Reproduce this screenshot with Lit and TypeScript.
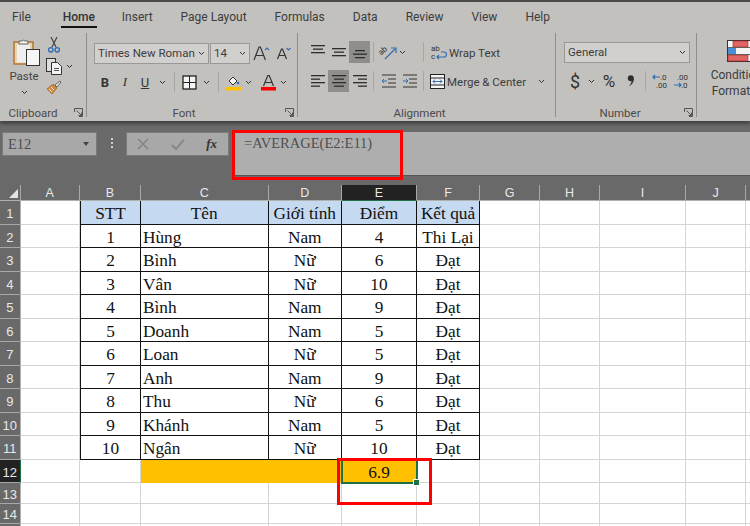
import { LitElement, html, css, svg } from "lit";
import { customElement } from "lit/decorators.js";

const COLS = [
  ["A", 59.5],
  ["B", 61],
  ["C", 127.5],
  ["D", 73.5],
  ["E", 75],
  ["F", 63],
  ["G", 60],
  ["H", 60],
  ["I", 86],
  ["J", 60],
  ["", 10],
] as [string, number][];

const ROWS: [string, string, string, string, string][] = [
  ["STT", "Tên", "Giới tính", "Điểm", "Kết quả"],
  ["1", "Hùng", "Nam", "4", "Thi Lại"],
  ["2", "Bình", "Nữ", "6", "Đạt"],
  ["3", "Vân", "Nữ", "10", "Đạt"],
  ["4", "Bình", "Nam", "9", "Đạt"],
  ["5", "Doanh", "Nam", "5", "Đạt"],
  ["6", "Loan", "Nữ", "5", "Đạt"],
  ["7", "Anh", "Nam", "9", "Đạt"],
  ["8", "Thu", "Nữ", "6", "Đạt"],
  ["9", "Khánh", "Nam", "5", "Đạt"],
  ["10", "Ngân", "Nữ", "10", "Đạt"],
];

const chev = html`<svg class="chev" width="7" height="5" viewBox="0 0 7 5"><path d="M1 1l2.500 2.500L6 1" fill="none" stroke="#333" stroke-width="1"/></svg>`;

const launcher = html`<svg class="launcher" width="9" height="9" viewBox="0 0 9 9"><path d="M.5 4V.5H8.500V8.500H5M2.500 2.500l5 5M4.500 7.500h3v-3" fill="none" stroke="#555" stroke-width="1"/></svg>`;

// horizontal text lines used by the alignment buttons
const lines = (rows: [number, number][], top = 3) => html`<svg width="16" height="16" viewBox="0 0 16 16">
  ${rows.map(
    ([x, w], i) => svg`<rect x=${x} y=${top + i * 3.5} width=${w} height="1.300" fill="#2e2e2e"/>`
  )}
</svg>`;

@customElement("app-root")
export class AppRoot extends LitElement {
  static styles = css`
    :host {
      display: block;
      width: 750px;
      height: 526px;
      overflow: hidden;
      position: relative;
      background: #6a6a6a;
      font-family: Roboto, "Open Sans", sans-serif;
    }
    .tabs {
      background: #c3c1be;
      display: flex;
      font-size: 12px;
      color: #3c3c3c;
      box-sizing: border-box;
      padding-left: 12px;
      border-top: 2px solid #4a4a4a;
      height: 33px;
    }
    .tab {
      margin-right: 28px;
      padding-top: 8px;
      height: 25px;
      box-sizing: border-box;
    }
    .tab.on {
      height: 26px;
      border-bottom: 2px solid #111;
      font-weight: 500;
      color: #333;
      padding: 8px 0 0;
      margin: 0 25px 0 2px;
      width: 36px;
      text-align: center;
    }
    .ribbon {
      height: 88px;
      background: #c3c1be;
      display: flex;
      box-shadow: 0 3px 3px #444;
      position: relative;
      font-size: 11.500px;
      color: #444;
    }
    .group {
      box-sizing: border-box;
      height: 84px;
      border-right: 1px solid #8f8d8b;
      position: relative;
      flex: none;
      display: flex;
      flex-direction: column;
    }
    .body {
      flex: 1;
      display: flex;
      min-height: 0;
    }
    .cap {
      height: 14px;
      margin-bottom: -3px;
      display: flex;
      align-items: center;
      justify-content: center;
      font-size: 11.500px;
      position: relative;
      color: #4a4a4a;
    }
    .launcher {
      position: absolute;
      right: 3px;
      top: 2px;
    }
    .clip {
      width: 87px;
    }
    .clip .cap {
      padding-right: 20px;
    }
    .paste {
      width: 42px;
      display: flex;
      flex-direction: column;
      align-items: center;
      padding: 5px 0 0 6px;
      box-sizing: border-box;
      line-height: 13px;
      gap: 4px;
    }
    .paste svg:first-child {
      margin-left: 4px;
    }
    .paste .chev {
      margin-top: 3px;
    }
    .clip-tools {
      display: flex;
      flex-direction: column;
      gap: 5px;
      padding: 4px 0 0 4px;
    }
    .tool-row {
      display: flex;
      align-items: center;
      gap: 4px;
    }
    .font {
      width: 211px;
    }
    .font .cap {
      padding-right: 16px;
    }
    .stack {
      display: flex;
      flex-direction: column;
      padding-top: 8px;
      gap: 6px;
    }
    .row {
      display: flex;
      align-items: center;
      height: 24px;
    }
    .row.second {
      margin-top: -1px;
    }
    .combo {
      height: 21px;
      box-sizing: border-box;
      background: #d2d0ce;
      border: 1px solid #9a9896;
      display: flex;
      align-items: center;
      justify-content: space-between;
      padding: 0 3px;
      font-size: 11.500px;
      color: #3c3c3c;
      margin-right: 1px;
      white-space: nowrap;
    }
    .btn {
      width: 20px;
      height: 22px;
      display: flex;
      align-items: center;
      justify-content: center;
      flex: none;
      color: #333;
    }
    .btn.on {
      background: #8f8e8c;
    }
    .vsep {
      width: 1px;
      height: 20px;
      background: #a8a6a4;
      flex: none;
    }
    .align {
      width: 258px;
    }
    .align .cap {
      padding-right: 14px;
    }
    .align .btn {
      width: 21px;
    }
    .number {
      width: 141px;
    }
    .number .cap {
      padding-right: 12px;
    }
    .wrap-label {
      display: flex;
      align-items: center;
      gap: 2px;
      font-size: 11.500px;
      white-space: nowrap;
      color: #3c3c3c;
      padding-top: 1px;
    }
    .cond {
      flex: none;
      display: flex;
      flex-direction: column;
      align-items: center;
      padding: 7px 0 0;
      width: 88px;
      line-height: 16px;
      font-size: 12px;
      gap: 5px;
      white-space: nowrap;
      color: #3c3c3c;
      text-align: center;
    }
    .fbar {
      height: 64px;
      display: flex;
      box-sizing: border-box;
      padding: 11px 0 0 2px;
      background: #6a6a6a;
    }
    .name {
      width: 95px;
      height: 24px;
      background: #a8a8a8;
      border: 1px solid #7a7a7a;
      box-sizing: border-box;
      display: flex;
      align-items: center;
      justify-content: space-between;
      padding: 0 7px 0 5px;
      font: 14.500px "Liberation Serif", serif;
      color: #4e4e4e;
    }
    .caret {
      width: 0;
      height: 0;
      border: 3.500px solid transparent;
      border-top: 4px solid #444;
      border-bottom: 0;
    }
    .dots {
      width: 29px;
      display: flex;
      flex-direction: column;
      align-items: center;
      gap: 2px;
      padding-top: 6px;
      box-sizing: border-box;
    }
    .dots i {
      width: 2px;
      height: 2px;
      background: #d0d0d0;
    }
    .fx {
      width: 103px;
      height: 24px;
      background: #a8a8a8;
      border: 1px solid #7a7a7a;
      box-sizing: border-box;
      display: flex;
      align-items: center;
      justify-content: space-between;
      padding: 0 11px 0 10px;
    }
    .fx em {
      font: italic 700 13px "Liberation Serif", serif;
      color: #333;
    }
    .input {
      margin-left: 3px;
      flex: 1;
      height: 44px;
      background: #aeaeae;
      border-bottom: 1px solid #555;
      box-sizing: border-box;
      padding: 3px 0 0 12px;
      font: 14.500px "Liberation Serif", serif;
      color: #4e4e4e;
    }
    .sheet {
      display: grid;
      grid-template-rows: 16px repeat(12, 23.500px) 20.500px 20.500px 20.500px;
      background: #fff;
      position: relative;
    }
    .ch,
    .rh {
      background: #696969;
      color: #e8e8e8;
      font: 12.500px "Liberation Sans", sans-serif;
      display: flex;
      align-items: center;
      justify-content: center;
      box-sizing: border-box;
    }
    .ch {
      border-right: 1px solid #a8a8a8;
      border-bottom: 1px solid #b0b0b0;
    }
    .rh {
      border-bottom: 1px solid #a8a8a8;
      border-right: 1px solid #b0b0b0;
      font-size: 13px;
      padding-top: 3px;
    }
    .corner {
      background: #696969;
      border-right: 1px solid #a8a8a8;
      border-bottom: 1px solid #b0b0b0;
      display: flex;
      align-items: flex-end;
      justify-content: flex-end;
      padding: 0 2px 2px 0;
      box-sizing: border-box;
    }
    .tri {
      width: 0;
      height: 0;
      border-left: 9px solid transparent;
      border-bottom: 9px solid #e4e4e4;
    }
    .sel-c {
      background: #222;
      border-bottom: 1px solid #1e7145;
    }
    .sel-r {
      background: #222;
      border-right: 1px solid #1e7145;
    }
    .cell {
      box-sizing: border-box;
      border-right: 1px solid #d4d4d4;
      border-bottom: 1px solid #d4d4d4;
      padding-top: 4px;
      font: 17.300px "Liberation Serif", serif;
      color: #111;
      display: flex;
      align-items: center;
      justify-content: center;
      white-space: nowrap;
      overflow: hidden;
    }
    .cell.t {
      border-right: 1px solid #111;
      border-bottom: 1px solid #111;
    }
    .cell.tl {
      border-left: 1px solid #111;
    }
    .cell.h {
      background: #c5daf1;
    }
    .cell.left {
      justify-content: flex-start;
      padding-left: 2px;
    }
    .cell.y {
      background: #ffc000;
      border-color: #ffc000;
    }
    .cell.active {
      background: #ffc000;
      outline: 2px solid #1e7145;
      outline-offset: -1px;
      position: relative;
      overflow: visible;
    }
    .handle {
      position: absolute;
      right: -4px;
      bottom: -4px;
      width: 5px;
      height: 5px;
      background: #1e7145;
      border: 1px solid #fff;
    }
    .mark {
      position: absolute;
      border: 3px solid #ff0000;
      box-sizing: border-box;
    }
    .mark.a {
      left: 232px;
      top: 130px;
      width: 171px;
      height: 50px;
    }
    .mark.b {
      left: 337px;
      top: 458px;
      width: 95px;
      height: 47px;
    }
    svg {
      overflow: visible;
      flex: none;
    }
  `;

  private cells() {
    const out: unknown[] = [];
    const heads = COLS.map(([c]) => {
      return html`<div class=${c === "E" ? "ch sel-c" : "ch"}>${c}</div>`;
    });
    out.push(html`<div class="corner"><span class="tri"></span></div>`, ...heads);
    for (let r = 1; r <= 15; r++) {
      // row 15 is only a sliver at the bottom edge, its number doesn't show
      out.push(html`<div class=${r === 12 ? "rh sel-r" : "rh"}>${r < 15 ? r : ""}</div>`);
      COLS.forEach(([c], i) => {
        out.push(this.cell(r, c, i));
      });
    }
    return out;
  }

  private cell(r: number, c: string, i: number) {
    if (r <= 11 && i >= 1 && i <= 5) {
      const val = ROWS[r - 1][i - 1];
      let cls = "cell t";
      if (i === 1) cls += " tl";
      if (r === 1) cls += " h";
      if (i === 2 && r > 1) cls += " left";
      return html`<div class=${cls}>${val}</div>`;
    }
    if (r === 12 && (c === "C" || c === "D")) return html`<div class="cell y"></div>`;
    if (r === 12 && c === "E")
      return html`<div class="cell active">6.9<span class="handle"></span></div>`;
    return html`<div class="cell"></div>`;
  }

  render() {
    const tpl = `grid-template-columns:20.5px ${COLS.map(([, w]) => w + "px").join(" ")}`;
    return html`
      <div class="tabs">
        <div class="tab">File</div>
        <div class="tab on">Home</div>
        <div class="tab">Insert</div>
        <div class="tab">Page Layout</div>
        <div class="tab">Formulas</div>
        <div class="tab">Data</div>
        <div class="tab">Review</div>
        <div class="tab">View</div>
        <div class="tab">Help</div>
      </div>
      <div class="ribbon">
        <div class="group clip">
          <div class="body">
            <div class="paste">
              <svg width="27" height="28" viewBox="0 0 27 28">
                <path d="M1 4h19v22H1z" fill="#e7d3b0" stroke="#b8742c" stroke-width="1.500"/>
                <rect x="4" y="6.500" width="13" height="18" fill="#eeeeee"/>
                <path d="M6 5V3h3a2 2 0 0 1 3 0h3v3H6z" fill="#f4f4f4" stroke="#666"/>
                <rect x="13.500" y="11.500" width="13" height="16" fill="#f6f6f6" stroke="#333"/>
              </svg>
              <span>Paste</span>
              ${chev}
            </div>
            <div class="clip-tools">
              <div class="tool-row">
                <svg width="12" height="16" viewBox="0 0 12 16" style="margin-left:2px">
                  <path d="M3 0l5 10M9 0L4 10" stroke="#444" stroke-width="1.200" fill="none"/>
                  <circle cx="2.800" cy="12.800" r="2.200" fill="none" stroke="#2f6db3" stroke-width="1.400"/>
                  <circle cx="9.200" cy="12.800" r="2.200" fill="none" stroke="#2f6db3" stroke-width="1.400"/>
                </svg>
              </div>
              <div class="tool-row">
                <svg width="16" height="17" viewBox="0 0 16 17">
                  <rect x=".5" y=".5" width="9" height="13" fill="#ddd" stroke="#333"/>
                  <path d="M5.500 4.500h6l4 4v8h-10z" fill="#f4f4f4" stroke="#333"/>
                  <path d="M8 10.500h5M8 12.500h5" stroke="#555"/>
                </svg>
                ${chev}
              </div>
              <div class="tool-row">
                <svg width="16" height="15" viewBox="0 0 16 15">
                  <path d="M1 9l6-5 4 4-5 6z" fill="#d08a3c" stroke="#8a5a25" stroke-width=".6"/>
                  <path d="M3 9l3 3M5 7l3 3" stroke="#f4e6d0"/>
                  <path d="M9 5l5-4 1 1-4 5z" fill="#eee" stroke="#444" stroke-width=".8"/>
                </svg>
              </div>
            </div>
          </div>
          <div class="cap">Clipboard${launcher}</div>
        </div>

        <div class="group font">
          <div class="body">
            <div class="stack" style="padding-left:7px">
              <div class="row">
                <div class="combo" style="width:115px"><span>Times New Roman</span>${chev}</div>
                <div class="combo" style="width:40px"><span>14</span>${chev}</div>
                <svg width="17" height="15" viewBox="0 0 17 15" style="margin-left:2px">
                  <path d="M1 14L6 1h1.400l5 13M3 9.500h7.500" fill="none" stroke="#333" stroke-width="1.200"/>
                  <path d="M12 4l2-2 2 2" fill="none" stroke="#2f6db3" stroke-width="1.100"/>
                </svg>
                <span style="width:7px"></span>
                <svg width="14" height="13" viewBox="0 0 14 13">
                  <path d="M.5 12L4.500 2h1l4 10M2 8.500h6" fill="none" stroke="#333" stroke-width="1.200"/>
                  <path d="M9.500 1l2 2 2-2" fill="none" stroke="#2f6db3" stroke-width="1.100"/>
                </svg>
              </div>
              <div class="row second">
                <div class="btn" style="font-weight:700;font-size:13px;margin-left:1px">B</div>
                <div class="btn" style="font:italic 13px 'Liberation Serif',serif">I</div>
                <div class="btn" style="text-decoration:underline;font-size:13px">U</div>
                <span style="width:4px"></span>${chev}
                <div class="vsep" style="margin:0 7px 0 8px"></div>
                <svg width="15" height="15" viewBox="0 0 15 15">
                  <rect x="1" y="1" width="13" height="13" fill="#f4f4f4" stroke="#222" stroke-width="1.300"/>
                  <path d="M7.500 1v13M1 7.500h13" stroke="#222" stroke-width="1"/>
                </svg>
                <span style="width:6px"></span>${chev}
                <div class="vsep" style="margin:0 7px 0 8px"></div>
                <svg width="15" height="17" viewBox="0 0 15 17">
                  <path d="M3 7l4-4 4 4-4 4z" fill="#f4f4f4" stroke="#333"/>
                  <circle cx="12" cy="9" r="1.300" fill="#2f6db3"/>
                  <rect y="13" width="15" height="3.500" fill="#ffc000"/>
                </svg>
                <span style="width:4px"></span>${chev}
                <span style="width:9px"></span>
                <svg width="15" height="17" viewBox="0 0 15 17">
                  <path d="M2.500 12L6.800 1.500h1.400L12.500 12M4 8.500h7" fill="none" stroke="#333" stroke-width="1.200"/>
                  <rect y="13" width="15" height="3.500" fill="#ff0000"/>
                </svg>
                <span style="width:4px"></span>${chev}
              </div>
            </div>
          </div>
          <div class="cap">Font${launcher}</div>
        </div>

        <div class="group align">
          <div class="body">
            <div class="stack" style="padding:7px 0 0 9px">
              <div class="row">
                <div class="btn">${lines([[1, 14], [3, 10], [1, 14]], 1)}</div>
                <div class="btn">${lines([[1, 14], [3, 10], [1, 14]], 4)}</div>
                <div class="btn on">${lines([[3, 10], [1, 14], [3, 10]], 6)}</div>
                <div class="vsep" style="margin:0 6px 0 3px"></div>
                <svg width="17" height="17" viewBox="0 0 17 17">
                  <text x="0" y="9" font-size="8" fill="#333" transform="rotate(-40 4 9)" font-family="Roboto">ab</text>
                  <path d="M5 15L15 5M11 4h5v5" stroke="#2f6db3" fill="none" stroke-width="1.200"/>
                </svg>
                <span style="width:2px"></span>${chev}
                <div class="vsep" style="margin:0 7px 0 17px"></div>
                <div class="wrap-label">
                  <svg width="16" height="17" viewBox="0 0 16 17">
                    <text x="0" y="7" font-size="8" fill="#333" font-family="Roboto">ab</text>
                    <text x="0" y="15" font-size="8" fill="#333" font-family="Roboto">c</text>
                    <path d="M6 13h7a2.500 2.500 0 0 0 0-5h-3M8 11l-2 2 2 2" stroke="#2f6db3" fill="none" stroke-width="1.200"/>
                  </svg>
                  Wrap Text
                </div>
              </div>
              <div class="row second">
                <div class="btn">${lines([[1, 14], [1, 9], [1, 14], [1, 9]], 2)}</div>
                <div class="btn on">${lines([[1, 14], [3, 10], [1, 14], [3, 10]], 2)}</div>
                <div class="btn">${lines([[1, 14], [6, 9], [1, 14], [6, 9]], 2)}</div>
                <div class="vsep" style="margin:0 4px 0 3px"></div>
                <div class="btn">
                  <svg width="15" height="14" viewBox="0 0 15 14">
                    <path d="M1 1h14M7 5h8M7 9h8M1 13h14" stroke="#333"/>
                    <path d="M6 7H1M3 5L1 7l2 2" stroke="#2f6db3" fill="none"/>
                  </svg>
                </div>
                <div class="btn">
                  <svg width="15" height="14" viewBox="0 0 15 14">
                    <path d="M1 1h14M7 5h8M7 9h8M1 13h14" stroke="#333"/>
                    <path d="M1 7h5M4 5l2 2-2 2" stroke="#2f6db3" fill="none"/>
                  </svg>
                </div>
                <div class="vsep" style="margin:0 6px 0 3px"></div>
                <div class="wrap-label">
                  <svg width="15" height="15" viewBox="0 0 15 15">
                    <rect x=".5" y=".5" width="14" height="14" fill="#f4f4f4" stroke="#222"/>
                    <path d="M.5 4h14M.5 11h14" stroke="#222"/>
                    <path d="M3 7.500h9M5 5.500l-2 2 2 2M10 5.500l2 2-2 2" stroke="#2f6db3" fill="none"/>
                  </svg>
                  Merge &amp; Center <span style="width:8px"></span>${chev}
                </div>
              </div>
            </div>
          </div>
          <div class="cap">Alignment</div>
        </div>

        <div class="group number">
          <div class="body">
            <div class="stack" style="padding:7px 0 0 8px">
              <div class="row">
                <div class="combo" style="width:126px"><span>General</span>${chev}</div>
              </div>
              <div class="row second">
                <div class="btn" style="font-size:18px;margin-left:1px">$</div>
                <span style="width:3px"></span>${chev}
                <div class="btn" style="font-size:17px;margin-left:4px">%</div>
                <div class="btn" style="margin-left:2px">
                  <svg width="8" height="12" viewBox="0 0 8 12">
                    <circle cx="3.800" cy="3.300" r="3" fill="#2e2e2e"/>
                    <path d="M6.800 3.300C7 7 5 10 1.500 11.500 3.500 9.500 4.500 8 4.500 6z" fill="#2e2e2e"/>
                  </svg>
                </div>
                <div class="vsep" style="margin:0 6px 0 4px"></div>
                <svg width="16" height="16" viewBox="0 0 16 16">
                  <text x="8" y="7" font-size="8" fill="#333" font-family="Roboto">.0</text>
                  <text x="4" y="15" font-size="8" fill="#333" font-family="Roboto">.00</text>
                  <path d="M8 4H1M3 2L1 4l2 2" stroke="#2f6db3" fill="none" stroke-width="1.200"/>
                </svg>
                <span style="width:5px"></span>
                <svg width="16" height="16" viewBox="0 0 16 16">
                  <text x="4" y="7" font-size="8" fill="#333" font-family="Roboto">.00</text>
                  <text x="8" y="15" font-size="8" fill="#333" font-family="Roboto">.0</text>
                  <path d="M1 12h7M6 10l2 2-2 2" stroke="#2f6db3" fill="none" stroke-width="1.200"/>
                </svg>
              </div>
            </div>
          </div>
          <div class="cap">Number${launcher}</div>
        </div>

        <div class="cond">
          <svg width="28" height="22" viewBox="0 0 28 22">
            <rect x=".5" y=".5" width="27" height="21" fill="#f4f4f4" stroke="#333"/>
            <rect x="6" y="1" width="15" height="6" fill="#e06666" stroke="#b02020" stroke-width=".6"/>
            <rect x="1" y="8" width="8" height="6" fill="#4a90d9"/>
            <rect x="1" y="15" width="20" height="6" fill="#e06666" stroke="#b02020" stroke-width=".6"/>
            <path d="M.5 7.500h27M.5 14.500h27" stroke="#444" stroke-width=".8"/>
          </svg>
          <span>Conditional<br />Formatting</span>
        </div>
      </div>

      <div class="fbar">
        <div class="name"><span>E12</span><span class="caret"></span></div>
        <div class="dots"><i></i><i></i><i></i></div>
        <div class="fx">
          <svg width="12" height="12" viewBox="0 0 12 12"><path d="M1 1l10 10M11 1L1 11" stroke="#858585" stroke-width="1.700"/></svg>
          <svg width="14" height="12" viewBox="0 0 14 12"><path d="M1 7l4 4L13 1.500" fill="none" stroke="#858585" stroke-width="1.900"/></svg>
          <em>fx</em>
        </div>
        <div class="input">=AVERAGE(E2:E11)</div>
      </div>

      <div class="sheet" style=${tpl}>${this.cells()}</div>

      <div class="mark a"></div>
      <div class="mark b"></div>
    `;
  }
}
